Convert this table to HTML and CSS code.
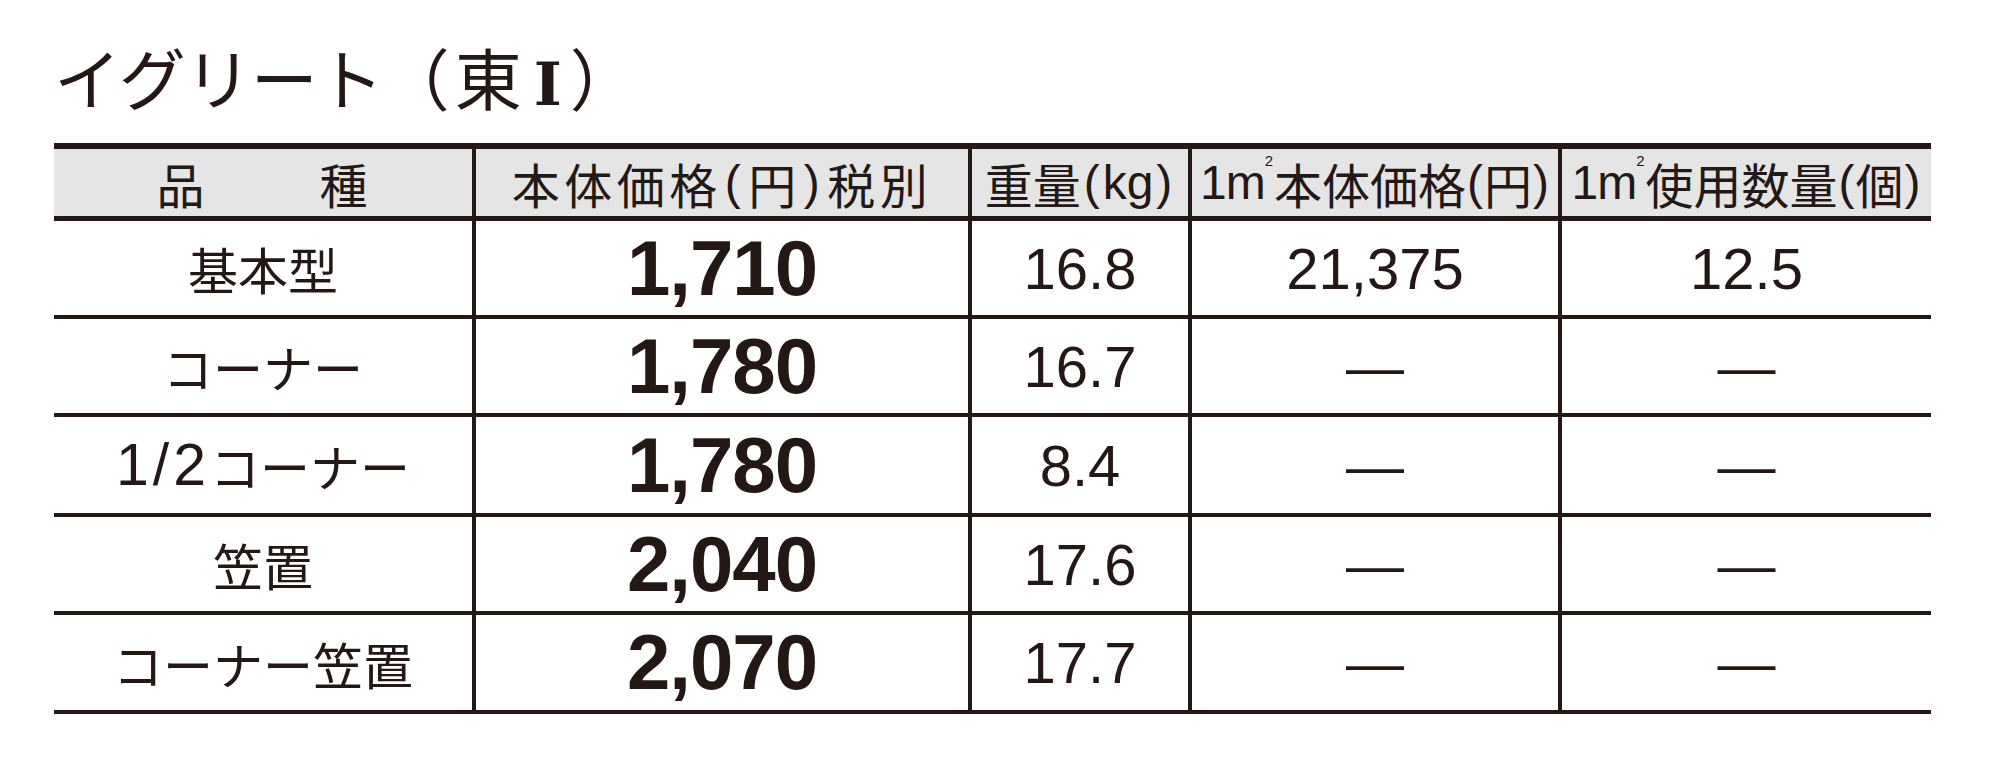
FILE: index.html
```html
<!DOCTYPE html>
<html lang="ja">
<head>
<meta charset="utf-8">
<title>イグリート（東Ⅰ）</title>
<link rel="stylesheet" href="styles.css">
</head>
<body>
<div class="page">
  <h1 class="title">イグリート（<span class="kan">東</span><span class="roman">Ⅰ</span>）</h1>
  <div class="tbl" role="table">
    <div class="cell head first" role="columnheader"><span class="hin">品</span><span>種</span></div>
    <div class="cell head wide" role="columnheader">本体価格<span class="par">(</span>円<span class="par">)</span>税別</div>
    <div class="cell head tight" role="columnheader">重量<span class="par">(</span>kg<span class="par">)</span></div>
    <div class="cell head sqm" role="columnheader"><span class="lat">1m</span><sup class="sq">2</sup>本体価格<span class="par">(</span>円<span class="par">)</span></div>
    <div class="cell head sqm" role="columnheader"><span class="lat">1m</span><sup class="sq">2</sup>使用数量<span class="par">(</span>個<span class="par">)</span></div>

    <div class="cell first label">基本型</div>
    <div class="cell price">1,710</div>
    <div class="cell num">16.8</div>
    <div class="cell num">21,375</div>
    <div class="cell num">12.5</div>

    <div class="cell first label">コーナー</div>
    <div class="cell price">1,780</div>
    <div class="cell num">16.7</div>
    <div class="cell num">—</div>
    <div class="cell num">—</div>

    <div class="cell first label"><span class="frac">1/2</span>コーナー</div>
    <div class="cell price">1,780</div>
    <div class="cell num">8.4</div>
    <div class="cell num">—</div>
    <div class="cell num">—</div>

    <div class="cell first label">笠置</div>
    <div class="cell price">2,040</div>
    <div class="cell num">17.6</div>
    <div class="cell num">—</div>
    <div class="cell num">—</div>

    <div class="cell first label">コーナー笠置</div>
    <div class="cell price">2,070</div>
    <div class="cell num">17.7</div>
    <div class="cell num">—</div>
    <div class="cell num">—</div>
  </div>
</div>
</body>
</html>
```
FILE: styles.css
```css
html, body {
  margin: 0;
  padding: 0;
  background: #ffffff;
}

body {
  color: #231815;
  font-family: "Liberation Sans", "Noto Sans CJK JP", sans-serif;
}

.page {
  padding: 45px 0 0 54px;
}

.title {
  margin: 0 0 36px 0;
  font-family: "Noto Sans CJK JP", sans-serif;
  font-weight: 400;
  font-size: 67px;
  line-height: 62px;
  letter-spacing: -1px;
  white-space: nowrap;
}

.kan {
  margin-left: 6px;
}

.roman {
  font-family: "DejaVu Sans Mono", "DejaVu Serif", "Noto Sans CJK JP", monospace;
  font-weight: 700;
  font-size: 60px;
  line-height: 0;
  letter-spacing: 0;
  padding: 0 8px 0 13px;
}

.tbl {
  display: grid;
  grid-template-columns: 418px 496px 220px 370px 373px;
  grid-template-rows: 78px 98px 98px 100px 98px 99px;
  width: 1877px;
}

.cell {
  box-sizing: border-box;
  display: flex;
  align-items: center;
  justify-content: center;
  border-left: 4px solid #231815;
  border-bottom: 4px solid #231815;
  white-space: nowrap;
}

.cell.first {
  border-left: none;
}

.head {
  background: #e5e5e5;
  border-top: 6px solid #231815;
  border-bottom: 5px solid #231815;
  font-family: "Liberation Sans", "Noto Sans CJK JP", sans-serif;
  font-size: 48px;
  letter-spacing: 2px;
}

.head.wide {
  letter-spacing: 4.5px;
}

.head.tight {
  letter-spacing: 0;
}

.head.sqm {
  letter-spacing: 0;
}

.head .par {
  padding: 0 3px;
}

.head.sqm .par {
  padding: 0 1px;
}

.lat {
  letter-spacing: -1px;
}

.hin {
  margin-right: 113px;
}

.sq {
  font-size: 15px;
  vertical-align: 0;
  position: relative;
  top: -22px;
  letter-spacing: 0;
  margin-left: 0;
  margin-right: 1px;
}

.label {
  font-family: "Liberation Sans", "Noto Sans CJK JP", sans-serif;
  font-size: 50px;
}

.frac {
  font-size: 59px;
  letter-spacing: 4px;
}

.price {
  font-family: "Liberation Sans", sans-serif;
  font-weight: 700;
  font-size: 78px;
  letter-spacing: -1px;
}

.num {
  font-family: "Liberation Sans", sans-serif;
  font-size: 58px;
}
```
